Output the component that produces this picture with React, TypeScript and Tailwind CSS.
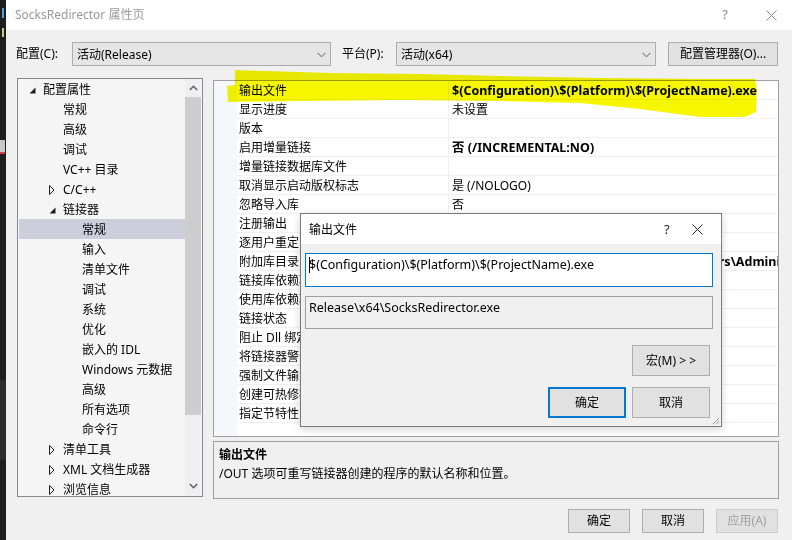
import React from "react";

type TreeItem = {
    label: string;
    level: 0 | 1 | 2;
    state?: "open" | "closed";
    selected?: boolean;
};

const treeItems: TreeItem[] = [
    { label: "配置属性", level: 0, state: "open" },
    { label: "常规", level: 1 },
    { label: "高级", level: 1 },
    { label: "调试", level: 1 },
    { label: "VC++ 目录", level: 1 },
    { label: "C/C++", level: 1, state: "closed" },
    { label: "链接器", level: 1, state: "open" },
    { label: "常规", level: 2, selected: true },
    { label: "输入", level: 2 },
    { label: "清单文件", level: 2 },
    { label: "调试", level: 2 },
    { label: "系统", level: 2 },
    { label: "优化", level: 2 },
    { label: "嵌入的 IDL", level: 2 },
    { label: "Windows 元数据", level: 2 },
    { label: "高级", level: 2 },
    { label: "所有选项", level: 2 },
    { label: "命令行", level: 2 },
    { label: "清单工具", level: 1, state: "closed" },
    { label: "XML 文档生成器", level: 1, state: "closed" },
    { label: "浏览信息", level: 1, state: "closed" },
];

// 缩进写成完整类名
const indent = ["pl-[10px]", "pl-[30px]", "pl-[49px]"];

type Prop = { name: string; value?: string; bold?: boolean };

const props: Prop[] = [
    { name: "输出文件", value: "$(Configuration)\\$(Platform)\\$(ProjectName).exe", bold: true },
    { name: "显示进度", value: "未设置" },
    { name: "版本" },
    { name: "启用增量链接", value: "否 (/INCREMENTAL:NO)", bold: true },
    { name: "增量链接数据库文件" },
    { name: "取消显示启动版权标志", value: "是 (/NOLOGO)" },
    { name: "忽略导入库", value: "否" },
    { name: "注册输出" },
    { name: "逐用户重定向" },
    { name: "附加库目录", value: "C:\\Program Files (x86)\\WinDivert\\lib;C:\\Users\\Administrator\\lib", bold: true },
    { name: "链接库依赖项" },
    { name: "使用库依赖项输入" },
    { name: "链接状态" },
    { name: "阻止 Dll 绑定" },
    { name: "将链接器警告视为错误" },
    { name: "强制文件输出" },
    { name: "创建可热修补映像" },
    { name: "指定节特性" },
];

const font = { fontFamily: '"Noto Sans", "Noto Sans CJK SC", sans-serif' };

function ChevronDown() {
    return (
        <svg width="9" height="6" viewBox="0 0 9 6" className="shrink-0">
            <path d="M0.5 0.8 L4.5 4.8 L8.5 0.8" fill="none" stroke="#5a5a5a" strokeWidth="1" />
        </svg>
    );
}

function CloseX({ color = "#8a8a8a" }: { color?: string }) {
    return (
        <svg width="11" height="11" viewBox="0 0 11 11">
            <path d="M0.5 0.5 L10.5 10.5 M10.5 0.5 L0.5 10.5" stroke={color} strokeWidth="1" />
        </svg>
    );
}

function Expander({ state }: { state?: "open" | "closed" }) {
    if (state === "open") {
        return (
            <svg width="7" height="7" viewBox="0 0 7 7">
                <path d="M6.5 0.5 L6.5 6.5 L0.5 6.5 Z" fill="#1e1e1e" />
            </svg>
        );
    }
    if (state === "closed") {
        return (
            <svg width="6" height="10" viewBox="0 0 6 10">
                <path d="M0.5 0.5 L5 5 L0.5 9.5 Z" fill="none" stroke="#1e1e1e" strokeWidth="1" />
            </svg>
        );
    }
    return null;
}

function Combo({ text, width }: { text: string; width: string }) {
    return (
        <div className={`${width} h-[24px] flex items-center justify-between bg-[#e5e5e5] border border-[#acacac] pl-[4px] pr-[4px] pt-[1px] text-[12px] text-black`}>
            <span>{text}</span>
            <ChevronDown />
        </div>
    );
}

function Button({ text, width, disabled, primary }: { text: string; width: string; disabled?: boolean; primary?: boolean }) {
    return (
        <div
            className={`${width} flex items-center justify-center text-[12px] bg-[#e1e1e1] ${
                primary ? "border-2 border-[#0078d7]" : "border border-[#adadad]"
            } ${disabled ? "text-[#a0a0a0] border-[#cccccc]" : "text-black"}`}
        >
            {text}
        </div>
    );
}

function Tree() {
    return (
        <div className="w-[186px] h-[419px] border border-[#828790] bg-[#f5f5f5] flex overflow-hidden">
            <div className="flex-1 pl-[1px] overflow-hidden">
                {treeItems.map((item, i) => (
                    <div
                        key={i}
                        className={`h-[20px] shrink-0 flex items-center pt-[2px] text-[12px] text-black ${indent[item.level]} ${
                            item.selected ? "bg-[#cccedb]" : ""
                        }`}
                    >
                        <div className="w-[14px] shrink-0 flex items-center">
                            <Expander state={item.state} />
                        </div>
                        <span className="whitespace-nowrap">{item.label}</span>
                    </div>
                ))}
            </div>
            {/* 滚动条 */}
            <div className="w-[16px] mr-[1px] flex flex-col bg-[#f0f0f0]">
                <div className="h-[18px] flex items-center justify-center">
                    <svg width="9" height="6" viewBox="0 0 9 6">
                        <path d="M0.8 5 L4.5 1.3 L8.2 5" fill="none" stroke="#606060" strokeWidth="1.6" />
                    </svg>
                </div>
                <div className="h-[318px] bg-[#cdcdcd]" />
                <div className="flex-1" />
                <div className="h-[18px] flex items-center justify-center mb-[1px]">
                    <svg width="9" height="6" viewBox="0 0 9 6">
                        <path d="M0.8 1 L4.5 4.7 L8.2 1" fill="none" stroke="#606060" strokeWidth="1.6" />
                    </svg>
                </div>
            </div>
        </div>
    );
}

function Grid() {
    return (
        <div className="h-[357px] mt-[2px] border border-[#a0a0a0] bg-white flex overflow-hidden">
            <div className="w-[23px] bg-[#f4f7fc] shrink-0" />
            <div className="flex-1 flex flex-col overflow-hidden">
                {props.map((p, i) => (
                    <div key={i} className="h-[19px] shrink-0 flex border-b border-[#f0f0f0] text-[12px] text-black">
                        <div className="w-[212px] shrink-0 pl-[2px] pt-[2px] border-r border-[#f0f0f0] flex items-center whitespace-nowrap overflow-hidden">
                            {p.name}
                        </div>
                        <div className={`flex-1 pl-[3px] pt-[2px] flex items-center whitespace-nowrap overflow-hidden ${p.bold ? "font-bold text-[12.5px]" : ""}`}>
                            {p.value}
                        </div>
                    </div>
                ))}
            </div>
        </div>
    );
}

function OutputDialog() {
    return (
        <div className="absolute left-[300px] top-[213px] w-[422px] h-[214px] border border-[#7a7a7a] bg-[#f0f0f0] flex flex-col shadow-[0_2px_8px_rgba(0,0,0,0.18)]">
            <div className="h-[30px] bg-white flex items-center pl-[8px] pt-[1px] text-[12px] text-black">
                <span className="flex-1">输出文件</span>
                <span className="w-[12px] text-[13px] text-[#222]">?</span>
                <div className="w-[45px] flex justify-center pr-[2px]">
                    <CloseX color="#222" />
                </div>
            </div>
            <div className="flex-1 flex flex-col px-[4px] pt-[9px] relative">
                <div className="h-[34px] w-[408px] bg-white border border-[#0078d7] pl-[3px] pt-[2px] text-[12.5px] leading-[18px] text-black flex">
                    <span className="w-[1px] h-[16px] bg-black mt-[1px] mr-[-1px]" />
                    <span>$(Configuration)\$(Platform)\$(ProjectName).exe</span>
                </div>
                <div className="h-[33px] w-[408px] mt-[9px] bg-[#f0f0f0] border border-[#a0a0a0] pl-[3px] pt-[2px] text-[12.5px] leading-[18px] text-black">
                    Release\x64\SocksRedirector.exe
                </div>
                <div className="flex justify-end pr-[7px] mt-[16px]">
                    <div className="w-[78px] h-[31px] flex">
                        <Button text="宏(M) > >" width="w-[78px]" />
                    </div>
                </div>
                <div className="flex justify-end gap-[6px] pr-[7px] mt-[11px]">
                    <div className="h-[31px] flex">
                        <Button text="确定" width="w-[78px]" primary />
                    </div>
                    <div className="h-[31px] flex">
                        <Button text="取消" width="w-[78px]" />
                    </div>
                </div>
                {/* 右下角拖拽手柄 */}
                <svg width="8" height="8" viewBox="0 0 8 8" className="absolute right-[1px] bottom-[1px]">
                    <path d="M7 1 L1 7 M7 4 L4 7 M7 6.5 L6.5 7" stroke="#9a9a9a" strokeWidth="1" />
                </svg>
            </div>
        </div>
    );
}

function Highlight() {
    return (
        <svg width="792" height="540" className="absolute left-0 top-0 pointer-events-none mix-blend-multiply">
            <polygon
                fill="#f6f600"
                points="235,70 265,71 330,73 420,74 500,76 600,78 700,79 755,79 757,90 756,112 745,117 700,117 640,109 580,103 500,101 400,100 300,101 228,102 227,86 235,85"
            />
        </svg>
    );
}

export default function App() {
    return (
        <div className="relative w-[792px] h-[540px] overflow-hidden flex bg-[#1e1e1e]" style={font}>
            {/* 背后编辑器的一条边 */}
            <div className="w-[6px] shrink-0 flex flex-col">
                <div className="h-[8px]" />
                <div className="h-[10px] w-[2px] ml-[2px] bg-[#569cd6]" />
                <div className="h-[10px]" />
                <div className="h-[9px] w-[2px] ml-[2px] bg-[#c8c87a]" />
                <div className="h-[103px]" />
                <div className="h-[14px] w-[5px] bg-[#c8c8c8] border-b-2 border-[#d04040]" />
                <div className="h-[226px]" />
                <div className="h-[80px] bg-[#2d2d30]" />
            </div>

            {/* 属性页窗口 */}
            <div className="flex-1 flex flex-col bg-[#f0f0f0]">
                <div className="h-[30px] bg-white flex items-center pl-[9px] text-[12px] text-[#999999]">
                    <span className="flex-1">SocksRedirector 属性页</span>
                    <span className="text-[13px] text-[#8a8a8a] mr-[38px]">?</span>
                    <div className="mr-[15px]">
                        <CloseX />
                    </div>
                </div>

                <div className="h-[24px] mt-[12px] flex items-center pl-[10px] text-[12px] text-black">
                    <span className="w-[56px]">配置(C):</span>
                    <Combo text="活动(Release)" width="w-[259px]" />
                    <span className="w-[54px] ml-[11px]">平台(P):</span>
                    <Combo text="活动(x64)" width="w-[260px]" />
                    <div className="h-[24px] ml-[12px] flex">
                        <Button text="配置管理器(O)..." width="w-[110px]" />
                    </div>
                </div>

                <div className="mt-[12px] flex pl-[11px] gap-[10px]">
                    <Tree />
                    <div className="w-[566px] flex flex-col">
                        <Grid />
                        <div className="h-[58px] mt-[4px] border border-[#a0a0a0] bg-[#f0f0f0] pl-[5px] pt-[3px] text-[12px] leading-[19px] text-black">
                            <div className="font-bold">输出文件</div>
                            <div>/OUT 选项可重写链接器创建的程序的默认名称和位置。</div>
                        </div>
                        <div className="h-[24px] mt-[10px] flex justify-end gap-[12px] pr-[1px]">
                            <Button text="确定" width="w-[62px]" />
                            <Button text="取消" width="w-[62px]" />
                            <Button text="应用(A)" width="w-[62px]" disabled />
                        </div>
                    </div>
                </div>
            </div>

            <OutputDialog />
            <Highlight />
        </div>
    );
}
